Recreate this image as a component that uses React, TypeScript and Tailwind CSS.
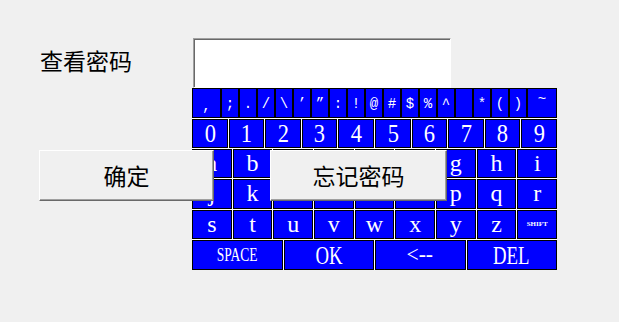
import React from "react";

const sym = [";", ".", "/", "\\", "\u2019", "\u201D", ":", "!", "@", "#", "$", "%", "^", "", "*", "(", ")"];
const r3 = ["a", "b", "c", "d", "e", "f", "g", "h", "i"];
const r4 = ["j", "k", "l", "m", "n", "o", "p", "q", "r"];
const r5 = ["s", "t", "u", "v", "w", "x", "y", "z"];

const keyBase =
  "bg-[#0000ff] border border-black text-white flex items-center justify-center";
const serif = { fontFamily: '"Liberation Serif", "DejaVu Serif", serif' };
const mono = { fontFamily: '"Liberation Mono", "DejaVu Sans Mono", monospace' };
const cjk = { fontFamily: '"Noto Sans CJK SC", "Noto Sans", sans-serif' };

function LetterRow({ keys, h, extra }: { keys: string[]; h: string; extra?: React.ReactNode }) {
  return (
    <div className={`flex gap-px ${h}`}>
      {keys.map((k) => (
        <div key={k} className={`${keyBase} flex-1 text-[24px] leading-none pb-[2px]`} style={serif}>
          {k}
        </div>
      ))}
      {extra}
    </div>
  );
}

export default function App() {
  return (
    <div className="relative w-[619px] h-[322px] bg-[#f0f0f0] overflow-hidden">
      <div className="pl-[40px] pt-[38px]">
        <div className="flex">
          <div className="w-[153px] pt-[6px] text-[23px] leading-[32px] text-black" style={cjk}>
            查看密码
          </div>
          <div className="w-[258px] h-[50px] bg-white border-t border-l border-[#a0a0a0] border-b border-r border-b-white border-r-white shadow-[inset_1px_1px_0_#696969]" />
        </div>
        <div className="ml-[152px] w-[365px] flex flex-col gap-px bg-white">
          <div className="flex h-[30px]">
            <div className={`${keyBase} w-[29px] text-[14px] pt-[6px]`} style={mono}>,</div>
            {sym.map((s, i) => (
              <div key={i} className={`${keyBase} w-[18px] text-[14px] pt-[2px]`} style={mono}>
                {s}
              </div>
            ))}
            <div className={`${keyBase} flex-1 text-[14px] pb-[8px]`} style={mono}>~</div>
          </div>
          <div className="flex gap-px h-[29px]">
            {["0", "1", "2", "3", "4", "5", "6", "7", "8", "9"].map((d) => (
              <div key={d} className={`${keyBase} flex-1 text-[25px] leading-none`} style={serif}>
                <span className="inline-block scale-x-90">{d}</span>
              </div>
            ))}
          </div>
          <LetterRow keys={r3} h="h-[29px]" />
          <LetterRow keys={r4} h="h-[30px]" />
          <LetterRow
            keys={r5}
            h="h-[29px]"
            extra={
              <div className={`${keyBase} flex-1 text-[7px] font-bold`} style={serif}>
                SHIFT
              </div>
            }
          />
          <div className="flex gap-px h-[30px]">
            <div className={`${keyBase} flex-1 text-[18px] leading-none`} style={serif}>
              <span className="inline-block scale-x-75">SPACE</span>
            </div>
            <div className={`${keyBase} flex-1 text-[25px] leading-none`} style={serif}>
              <span className="inline-block scale-x-75">OK</span>
            </div>
            <div className={`${keyBase} flex-1 text-[24px] leading-none pb-[2px]`} style={serif}>
              <span className="inline-block scale-x-90">&lt;--</span>
            </div>
            <div className={`${keyBase} flex-1 text-[25px] leading-none`} style={serif}>
              <span className="inline-block scale-x-75">DEL</span>
            </div>
          </div>
        </div>
      </div>

      <button
        className="absolute left-[39px] top-[150px] w-[175px] h-[51px] bg-[#f0f0f0] border-t border-l border-white border-b border-r border-b-[#696969] border-r-[#696969] shadow-[inset_-1px_-1px_0_#a0a0a0] text-[23px] text-black flex items-center justify-center"
        style={cjk}
      >
        确定
      </button>
      <button
        className="absolute left-[270px] top-[150px] w-[177px] h-[51px] bg-[#f0f0f0] border-t border-l border-white border-b border-r border-b-[#696969] border-r-[#696969] shadow-[inset_-1px_-1px_0_#a0a0a0] text-[23px] text-black flex items-center justify-center"
        style={cjk}
      >
        忘记密码
      </button>
    </div>
  );
}
